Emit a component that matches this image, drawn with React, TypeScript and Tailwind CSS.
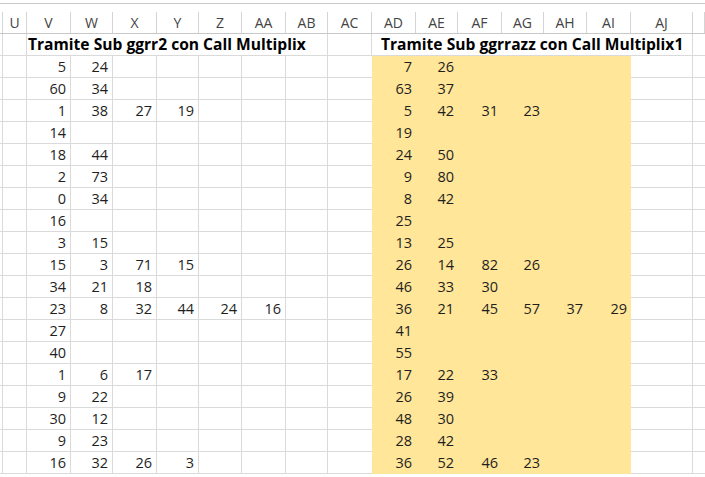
const cols = ['T', 'U', 'V', 'W', 'X', 'Y', 'Z', 'AA', 'AB', 'AC', 'AD', 'AE', 'AF', 'AG', 'AH', 'AI', 'AJ', ''];

const left: number[][] = [
  [5, 24],
  [60, 34],
  [1, 38, 27, 19],
  [14],
  [18, 44],
  [2, 73],
  [0, 34],
  [16],
  [3, 15],
  [15, 3, 71, 15],
  [34, 21, 18],
  [23, 8, 32, 44, 24, 16],
  [27],
  [40],
  [1, 6, 17],
  [9, 22],
  [30, 12],
  [9, 23],
  [16, 32, 26, 3],
];

const right: number[][] = [
  [7, 26],
  [63, 37],
  [5, 42, 31, 23],
  [19],
  [24, 50],
  [9, 80],
  [8, 42],
  [25],
  [13, 25],
  [26, 14, 82, 26],
  [46, 33, 30],
  [36, 21, 45, 57, 37, 29],
  [41],
  [55],
  [17, 22, 33],
  [26, 39],
  [48, 30],
  [28, 42],
  [36, 52, 46, 23],
];

const grid =
  'grid grid-cols-[3px_24px_44px_42px_44px_42px_43px_44px_42px_44px_44px_42px_44px_42px_43px_44px_62px_1fr]';

function Cell({ v, fill }: { v?: number; fill?: boolean }) {
  return (
    <div
      className={
        'h-[22px] flex items-center justify-end pr-[4px] ' +
        (fill ? 'bg-[#ffe699]' : 'border-r border-b border-[#dadada]')
      }>
      {v !== undefined ? v : ''}
    </div>
  );
}

export default function App() {
  return (
    <div
      className="w-[705px] h-[477px] overflow-hidden bg-white pt-[3px] text-[#1f1f1f]"
      style={{ fontFamily: '"Open Sans", "Noto Sans", sans-serif' }}>
      {/* column headers */}
      <div className={grid + ' border-t border-b border-[#c8c8c8] h-[31px] items-end text-[#444] text-[14px]'}>
        {cols.map((c, i) => (
          <div
            key={i}
            className="h-[21px] border-r border-[#d4d4d4] flex items-center justify-center overflow-hidden whitespace-nowrap">
            {c === 'T' ? '' : c}
          </div>
        ))}
      </div>

      <div className="text-[14.5px]">
        {/* title row */}
        <div className={grid}>
          <div className="h-[22px] border-r border-b border-[#dadada]" />
          <div className="h-[22px] border-r border-b border-[#dadada]" />
          <div className="col-span-7 h-[22px] border-r border-b border-[#dadada] flex items-center pl-[1px] text-[15.6px] font-bold whitespace-nowrap text-black">
            Tramite Sub ggrr2 con Call Multiplix
          </div>
          <div className="h-[22px] border-r border-b border-[#dadada]" />
          <div className="col-span-7 h-[22px] border-r border-b border-[#dadada] flex items-center pl-[9px] text-[15.6px] font-bold whitespace-nowrap text-black">
            Tramite Sub ggrrazz con Call Multiplix1
          </div>
          <div className="h-[22px] border-b border-[#dadada]" />
        </div>

        {/* data rows */}
        {left.map((row, i) => (
          <div key={i} className={grid}>
            <div className="h-[22px] border-r border-b border-[#dadada]" />
            <div className="h-[22px] border-r border-b border-[#dadada]" />
            {[0, 1, 2, 3, 4, 5, 6].map((j) => (
              <Cell key={'l' + j} v={row[j]} />
            ))}
            <div className="h-[22px] border-b border-[#dadada]" />
            {[0, 1, 2, 3, 4, 5].map((j) => (
              <Cell key={'r' + j} v={right[i][j]} fill />
            ))}
            <div className="h-[22px] border-r border-b border-[#dadada]" />
            <div className="h-[22px] border-b border-[#dadada]" />
          </div>
        ))}
      </div>
    </div>
  );
}
